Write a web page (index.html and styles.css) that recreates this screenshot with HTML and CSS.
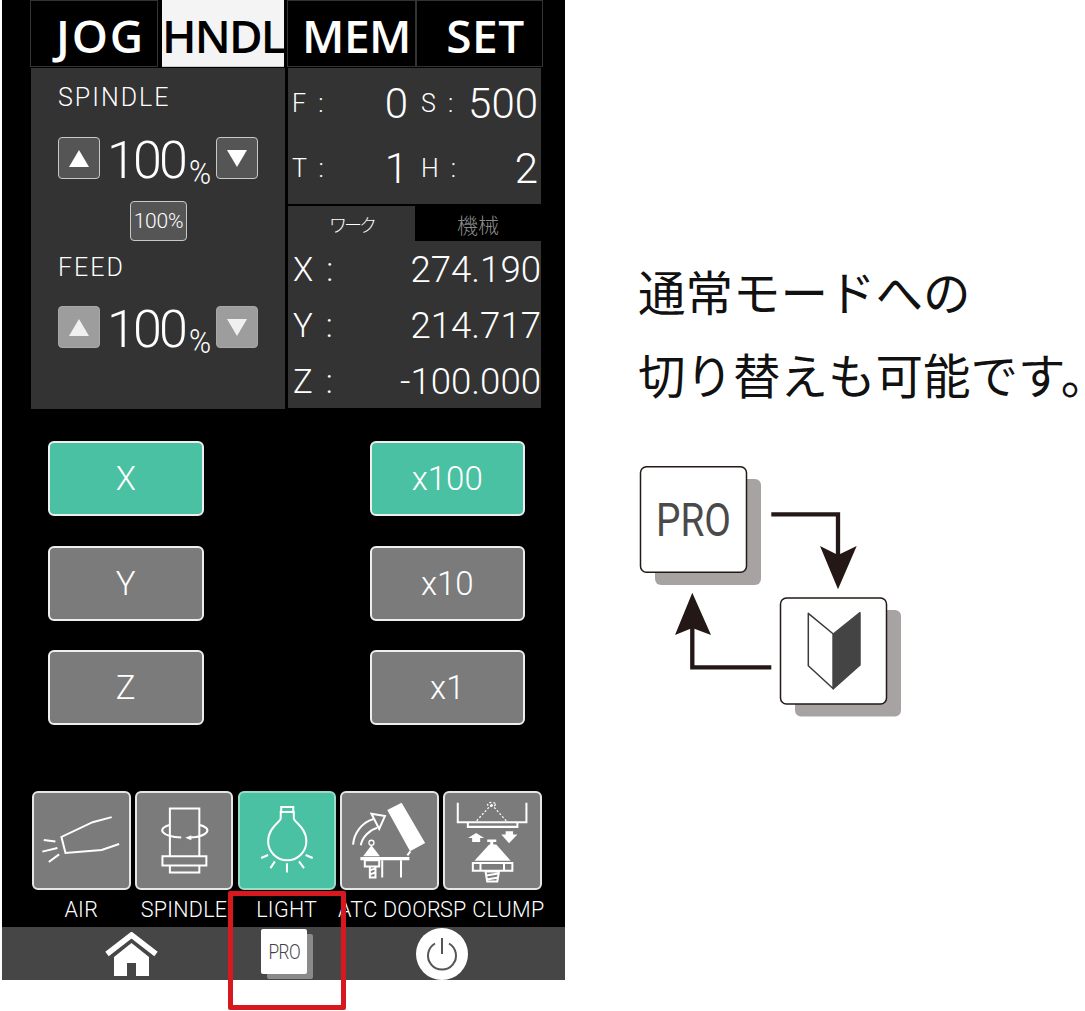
FILE: index.html
```html
<!DOCTYPE html>
<html lang="ja">
<head>
<meta charset="utf-8">
<title>HNDL</title>
<link rel="stylesheet" href="styles.css">
</head>
<body>
<div class="stage">
  <main class="phone">
    <nav class="tabs">
      <div class="tab tab-jog">JOG</div>
      <div class="tab tab-on">HNDL</div>
      <div class="tab tab-mem">MEM</div>
      <div class="tab tab-set">SET</div>
    </nav>
    <section class="panels">
      <div class="overrides">
        <div class="ov-label">SPINDLE</div>
        <div class="stepper">
          <button class="step"><span class="tri-up"></span></button>
          <div class="pct">100<small>%</small></div>
          <button class="step"><span class="tri-down"></span></button>
        </div>
        <div class="reset-row"><button class="reset">100%</button></div>
        <div class="ov-label feed-label">FEED</div>
        <div class="stepper feed-stepper">
          <button class="step step-dim"><span class="tri-up"></span></button>
          <div class="pct">100<small>%</small></div>
          <button class="step step-dim"><span class="tri-down"></span></button>
        </div>
      </div>
      <div class="status">
        <div class="fsth">
          <div class="pair"><span class="k">F :</span><span class="v">0</span></div>
          <div class="pair"><span class="k">S :</span><span class="v">500</span></div>
          <div class="pair"><span class="k">T :</span><span class="v">1</span></div>
          <div class="pair"><span class="k">H :</span><span class="v">2</span></div>
        </div>
        <div class="coord-tabs">
          <div class="ctab ctab-on">ワーク</div>
          <div class="ctab">機械</div>
        </div>
        <div class="coords">
          <div class="coord"><span class="axis">X :</span><span class="num">274.190</span></div>
          <div class="coord"><span class="axis">Y :</span><span class="num">214.717</span></div>
          <div class="coord"><span class="axis">Z :</span><span class="num">-100.000</span></div>
        </div>
      </div>
    </section>
    <section class="selectors">
      <button class="sel sel-on">X</button>
      <button class="sel sel-on">x100</button>
      <button class="sel">Y</button>
      <button class="sel">x10</button>
      <button class="sel">Z</button>
      <button class="sel">x1</button>
    </section>
    <section class="funcs">
      <button class="func">
        <svg class="func-ico" viewBox="2 2 94 94"><path d="M79.3 26 60.3 31 29.3 45.7 33.3 61.7 69.3 58.7 86.7 52.7M11.7 48.7 23.3 50.3M10.3 60.3 25.3 56.7M16.7 70.7 27 63"/></svg>
      </button>
      <button class="func">
        <svg class="func-ico" viewBox="2 2 94 94"><path d="M34.7 65V17.3H64V65M27.3 65H71V74H27.3ZM34.7 74V81H64V74M34.7 33.5A21.7 7.3 0 0 0 46 46.3M64 33.5A21.7 7.3 0 0 1 55 46.3"/><path class="solid" d="M50 46.5 56 44V49Z"/></svg>
      </button>
      <button class="func func-on">
        <svg class="func-ico" viewBox="2 2 94 94"><path d="M43 21V16H55V21M42.5 21H55.5V27C55.5 31 68 36 68 50A19 19 0 0 1 30 50C30 36 42.5 31 42.5 27ZM23 66.7 30 63.7M32.3 76.7 36.7 70M48.7 81V72M65.7 76.7 60.7 70M67.3 63.7 74.3 66.7"/></svg>
      </button>
      <button class="func">
        <svg class="func-ico" viewBox="2 2 94 94"><path class="solid" d="M47 19 61.3 11.7 84.7 51.7 69.7 60ZM20.3 65.7H69V69H20.3ZM23 65 31.3 54 39.7 65Z"/><path d="M13 53.3C14 42 22 31 33 28M20.7 54C22 46 29 39 37 36.7M31.3 22.7 44.7 25 39 37.7ZM70 60 67 64M42 69V86M60.7 69V86M24.7 69H39V75H24.7ZM29.7 75V86H35.3V75M29.7 79 35.3 77M29.7 83 35.3 81"/><circle class="thin" cx="31.3" cy="51.5" r="2.5"/></svg>
      </button>
      <button class="func">
        <svg class="func-ico" viewBox="2 2 94 94"><path d="M14.7 11.7V31H83V11.7M24.7 31H74V35.7H24.7ZM29.7 71.7H69V79.3H29.7ZM37.3 71.7V79.3M60.7 71.7V79.3M42.3 80H55.7L54 90H44ZM43 84 55 82M43.5 88 55 86"/><path class="dash" d="M48.3 13.3 32.3 31M48.3 13.3 64 31"/><ellipse class="dash" cx="48.3" cy="13.3" rx="4" ry="2"/><path class="solid" d="M33 41.7 41 46.7H37V50.7H29V46.7H25ZM65.7 52 74 43.3H69.7V40H62.3V43.3H58ZM44 48.3H53V50.7H50V53.3H53L67.3 69.3H31.3L46 53.3H47V50.7H44Z"/></svg>
      </button>
    </section>
    <section class="func-labels">
      <span>AIR</span>
      <span>SPINDLE</span>
      <span>LIGHT</span>
      <span>ATC DOOR</span>
      <span>SP CLUMP</span>
    </section>
    <footer class="bar">
      <svg class="home" viewBox="0 0 53 44"><path class="home-roof" d="M2 22 26.5 3 51 22"/><path class="home-body" d="M9 25 26.5 11 44 25V44H31V31H22V44H9Z"/></svg>
      <div class="pro-mini"><span class="pro-label">PRO</span></div>
      <svg class="power" viewBox="0 0 52 52"><circle class="power-bg" cx="26" cy="26" r="26"/><path class="power-line" d="M19 15.5A14 14 0 1 0 33 15.5M26 10V26"/></svg>
    </footer>
  </main>
  <aside class="side">
    <p class="side-text">通常モードへの<br>切り替えも可能です。</p>
    <svg class="cycle" viewBox="0 0 280 265">
      <rect class="shadow" x="25" y="19" width="106" height="106" rx="6"/>
      <rect class="card" x="10.5" y="6.7" width="106" height="105.5" rx="6"/>
      <text class="card-text" x="63.5" y="76" textLength="75" lengthAdjust="spacingAndGlyphs">PRO</text>
      <rect class="shadow" x="165" y="150" width="106" height="106.5" rx="6"/>
      <rect class="card" x="150.5" y="138" width="106" height="106" rx="6"/>
      <path class="leaf-l" d="M178.3 153.3 203.3 174V228.7L178.3 205.7Z"/>
      <path class="leaf-r" d="M203.3 174 230 152.7V205L203.3 228.7Z"/>
      <path class="arrow-line" d="M141.3 54.3H208V100M141.3 207.3H62.3V165"/>
      <path class="arrow-head" d="M190 86 208 95 226.7 86 208 129.3ZM45 175 62.3 168 81 175 62.3 132.7Z"/>
    </svg>
  </aside>
  <div class="highlight"></div>
</div>
</body>
</html>
```
FILE: styles.css
```css
* { box-sizing: border-box; }
html, body { margin: 0; padding: 0; background: #fff; overflow: hidden; }
body { width: 1085px; height: 1011px; font-family: Roboto, "Noto Sans CJK JP", sans-serif; font-weight: 300; color: #fff; }
button { font: inherit; color: inherit; padding: 0; margin: 0; }

.stage { position: relative; display: flex; width: 1085px; height: 1011px; padding-left: 2px; }

.phone { width: 563px; height: 980px; flex: none; background: #000; }

/* mode tabs */
.tabs { display: grid; grid-template-columns: 128px 129px 129px 127px; margin-left: 28px; height: 67px; }
.tab { display: flex; align-items: center; justify-content: center; border: 1px solid #333; font-family: "Open Sans", sans-serif; font-weight: 600; font-size: 46px; letter-spacing: -0.5px; white-space: nowrap; padding-top: 3px; overflow: hidden; }
.tab-jog { padding-left: 13px; letter-spacing: 1.8px; }
.tab-mem { padding-left: 10px; }
.tab-set { padding-left: 12px; letter-spacing: 0.5px; }
.tab-on { background: #f4f4f4; color: #000; margin: 0 3px 0 4px; border-color: #ccc; border-width: 0 0 1px; letter-spacing: -1.8px; }

/* upper panels */
.panels { display: grid; grid-template-columns: 254px 253px; column-gap: 3px; margin: 1px 0 0 29px; height: 341px; }
.overrides { background: #333; padding: 14px 0 0 27px; }
.ov-label { font-size: 25px; line-height: 32px; letter-spacing: 2px; }
.stepper { display: flex; align-items: flex-start; margin-top: 23px; }
.step { width: 42px; height: 42px; flex: none; display: flex; align-items: center; justify-content: center; background: #555; border: 1.5px solid #c8c8c8; border-radius: 4px; }
.step-dim { background: #9d9d9d; border-color: #a8a8a8; }
.step-dim span { opacity: .85; }
.tri-up { width: 0; height: 0; border-left: 10px solid transparent; border-right: 10px solid transparent; border-bottom: 17px solid #fff; }
.tri-down { width: 0; height: 0; border-left: 10px solid transparent; border-right: 10px solid transparent; border-top: 17px solid #fff; }
.pct { width: 116px; height: 42px; flex: none; padding-left: 7px; font-size: 52px; line-height: 48px; white-space: nowrap; letter-spacing: -2.8px; }
.pct small { display: inline-block; font-size: 34px; line-height: 34px; letter-spacing: 0; margin-left: 4px; transform: scaleX(.88); transform-origin: left center; position: relative; top: 6px; }
.reset-row { display: flex; margin: 22px 0 0 72px; }
.reset { width: 57px; height: 40px; font-size: 21px; background: #555; border: 1.5px solid #c8c8c8; border-radius: 4px; letter-spacing: -0.2px; }
.feed-label { margin-top: 11px; }
.feed-stepper { margin-top: 22px; }

.status { display: flex; flex-direction: column; }
.fsth { display: grid; grid-template-columns: 116px 1fr; grid-auto-rows: 65px; height: 136px; padding: 3px 3px 0 4px; background: #333; column-gap: 13px; }
.pair { display: flex; justify-content: space-between; align-items: center; }
.k { font-size: 25px; letter-spacing: 3px; }
.v { font-size: 42px; }
.coord-tabs { display: grid; grid-template-columns: 127px 126px; margin-top: 2px; height: 35px; }
.ctab { display: flex; align-items: center; justify-content: center; font-family: "Noto Sans CJK JP", sans-serif; font-size: 21px; color: #8a8a8a; }
.ctab-on { background: #333; color: #fff; font-size: 18px; letter-spacing: -3px; }
.coords { height: 167px; background: #333; }
.coord { display: flex; justify-content: space-between; align-items: center; height: 56px; padding: 0 0 0 5px; }
.axis { font-size: 33px; letter-spacing: 2.5px; }
.num { font-size: 36.6px; white-space: nowrap; }

/* axis and step selectors */
.selectors { display: grid; grid-template-columns: 155.5px 155.5px; grid-auto-rows: 75px; justify-content: space-between; row-gap: 29.5px; margin: 32px 0 0 0; padding: 0 40px 0 46px; }
.sel { background: #7b7b7b; border: 2px solid #eee; border-radius: 6px; font-size: 33px; }
.sel-on { background: #4ac1a2; }

/* machine functions */
.funcs { display: grid; grid-template-columns: repeat(5, 98.5px); column-gap: 4.25px; margin: 66px 0 0 30px; height: 99px; }
.func { width: 98.5px; height: 98.5px; background: #7b7b7b; border: 2px solid #e6e6e6; border-radius: 6px; display: block; }
.func-on { background: #4ac1a2; border-color: #9adcc8; }
.func-ico { display: block; width: 94.5px; height: 94.5px; fill: none; stroke: #fff; stroke-width: 2; }
.func-ico .solid { fill: #fff; stroke: none; }
.func-ico .dash { stroke-dasharray: 2 2; stroke-width: 1.3; }
.func-ico .thin { stroke-width: 1.3; }

.func-labels { display: grid; grid-template-columns: repeat(5, 98.5px); column-gap: 4.25px; margin: 7px 0 0 30px; height: 30px; font-size: 21.5px; line-height: 26px; letter-spacing: 0.3px; }
.func-labels span { display: flex; justify-content: center; white-space: nowrap; }

/* bottom bar */
.bar { display: flex; align-items: center; gap: 103px; height: 53px; background: #464646; padding-left: 103px; }
.home { width: 53px; height: 44px; flex: none; }
.home-roof { fill: none; stroke: #fff; stroke-width: 5.5; }
.home-body { fill: #fff; }
.pro-mini { width: 46px; height: 45px; flex: none; display: flex; align-items: center; justify-content: center; background: #fff; border-radius: 2px; box-shadow: 6px 5px 0 #8a8a8a; color: #444; font-size: 21px; margin: -4px 6px 0 0; }
.pro-label { display: inline-block; letter-spacing: -0.6px; transform: scaleX(.82); }
.power { width: 52px; height: 52px; flex: none; }
.power-bg { fill: #fff; }
.power-line { fill: none; stroke: #555; stroke-width: 2; }

/* explanation */
.side { flex: none; width: 520px; padding: 249px 0 0 73px; color: #000; overflow: hidden; }
.side-text { margin: 0; font-family: "Noto Sans CJK JP", sans-serif; font-weight: 400; font-size: 47.5px; line-height: 83px; white-space: nowrap; color: #111; }
.cycle { display: block; width: 280px; height: 265px; margin: 45px 0 0 -8px; }
.shadow { fill: #a8a3a3; }
.card { fill: #fff; stroke: #231815; stroke-width: 1.5; }
.card-text { font-family: Roboto, sans-serif; font-size: 47px; font-weight: 400; fill: #4a4a4a; text-anchor: middle; }
.leaf-l { fill: #fff; stroke: #3e3a39; stroke-width: 1.5; stroke-linejoin: round; }
.leaf-r { fill: #444; stroke: #444; stroke-width: 1.5; stroke-linejoin: round; }
.arrow-line { fill: none; stroke: #231815; stroke-width: 4.3; }
.arrow-head { fill: #231815; }

.highlight { position: absolute; left: 228px; top: 891px; width: 118px; height: 119px; border: 5px solid #d7181f; border-radius: 2px; pointer-events: none; }
```
